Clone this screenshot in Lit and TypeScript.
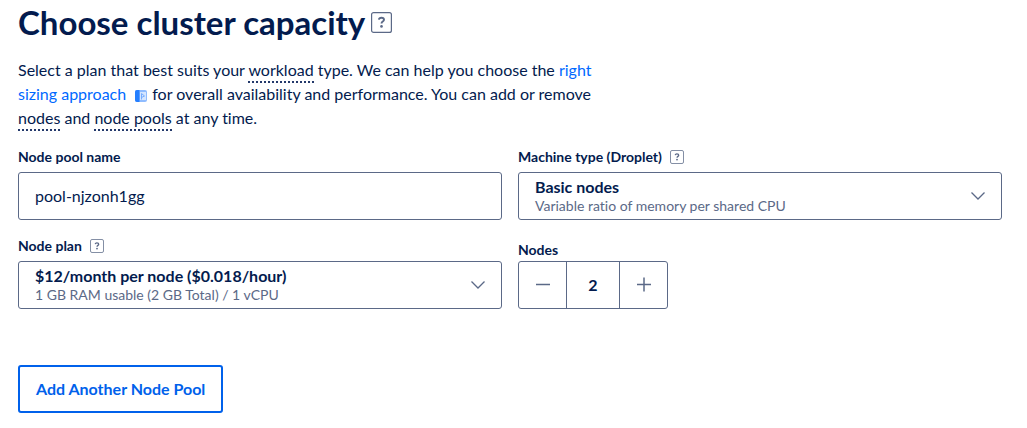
import { LitElement, html, css, svg } from "lit";
import { customElement, property, state } from "lit/decorators.js";

@customElement("help-tip")
class HelpTip extends LitElement {
  @property() label = "Help";
  @property({ type: Boolean, reflect: true }) large = false;

  static styles = css`
    :host { display: inline-flex; }
    .tip {
      display: flex;
      width: 14px;
      height: 14px;
      padding: 0;
      border: 0;
      background: none;
      color: #5b6987;
      cursor: pointer;
    }
    :host([large]) .tip { width: 21px; height: 21px; }
    svg { width: 100%; height: 100%; }
  `;

  render() {
    return html`
      <button class="tip" type="button" aria-label=${this.label}>
        ${this.large
          ? svg`<svg viewBox="0 0 21 21" fill="none" stroke="currentColor">
              <rect x=".6" y=".6" width="19.8" height="19.8" rx="2" stroke-width="1.2" />
              <path d="M7.9 7.6C8.1 6.3 9.1 5.7 10.4 5.7c1.5 0 2.6.7 2.6 2 0 1.8-2.5 1.9-2.5 3.7" stroke-width="1.9" />
              <circle cx="10.5" cy="14.4" r="1.3" fill="currentColor" stroke="none" />
            </svg>`
          : svg`<svg viewBox="0 0 14 14" fill="none" stroke="currentColor">
              <rect x=".5" y=".5" width="13" height="13" rx="1.5" stroke-opacity=".75" />
              <path d="M5.2 5.1C5.4 4.3 6 3.9 6.9 3.9c1 0 1.8.5 1.8 1.3 0 1.2-1.7 1.2-1.7 2.5" stroke-width="1.3" />
              <circle cx="7" cy="9.6" r=".9" fill="currentColor" stroke="none" />
            </svg>`}
      </button>
    `;
  }
}

@customElement("option-picker")
class OptionPicker extends LitElement {
  @property() label = "";
  @property() value = "";
  @property() detail = "";

  static styles = css`
    :host { display: block; }
    .head {
      display: flex;
      align-items: center;
      gap: 8px;
      margin-bottom: 5px;
      font-size: 14px;
      font-weight: 700;
      line-height: 20px;
    }
    .box { display: grid; align-items: center; }
    .box > * { grid-area: 1 / 1; }
    .select {
      appearance: none;
      box-sizing: border-box;
      width: 100%;
      height: 48px;
      padding: 0 40px 18px 16px;
      border: 1px solid #5b6987;
      border-radius: 3px;
      background: #fff;
      color: #031b4e;
      font: 700 16px / 24px Lato, sans-serif;
      font-variant-ligatures: none;
    }
    .detail {
      align-self: end;
      padding: 0 40px 5px 17px;
      color: #5b6987;
      font-size: 14px;
      line-height: 18px;
      pointer-events: none;
    }
    .chevron {
      justify-self: end;
      width: 16px;
      height: 16px;
      margin-right: 16px;
      color: #5b6987;
      pointer-events: none;
    }
  `;

  render() {
    return html`
      <div class="head">
        <label for="choice">${this.label}</label>
        <help-tip label="About ${this.label}"></help-tip>
      </div>
      <div class="box">
        <select class="select" id="choice" aria-describedby="detail">
          <option>${this.value}</option>
        </select>
        <span class="detail" id="detail">${this.detail}</span>
        <svg class="chevron" viewBox="0 0 16 16" fill="none" stroke="currentColor" stroke-width="1.3">
          <path d="M1.5 4.5 8 11l6.5-6.5" />
        </svg>
      </div>
    `;
  }
}

@customElement("app-root")
class AppRoot extends LitElement {
  @state() private nodes = 2;

  static styles = css`
    :host {
      display: block;
      padding: 2px 25px 15px 18px;
      background: #fff;
      color: #031b4e;
      font-family: Lato, sans-serif;
      font-size: 16px;
      font-variant-ligatures: none;
    }
    .title {
      display: flex;
      align-items: center;
      gap: 6px;
      margin-bottom: 16px;
    }
    h1 {
      margin: 0;
      font-size: 33px;
      font-weight: 700;
      line-height: 40px;
    }
    .intro {
      max-width: 584px;
      margin: 0 0 17px;
      line-height: 24px;
    }
    .term {
      padding-bottom: 2px;
      border-bottom: 2px dotted #24396b;
    }
    .link { color: #0069ff; text-decoration: none; }
    .doc {
      width: 12px;
      height: 12px;
      margin: 0 1px 0 9px;
      vertical-align: -2px;
    }
    .fields {
      display: grid;
      grid-template-columns: 1fr 1fr;
      gap: 16px;
      align-items: end;
    }
    .label {
      display: block;
      margin-bottom: 5px;
      font-size: 14px;
      font-weight: 700;
      line-height: 20px;
    }
    .tight { margin-bottom: 1px; }
    .input {
      box-sizing: border-box;
      display: block;
      width: 100%;
      height: 48px;
      padding: 0 16px 2px;
      border: 1px solid #5b6987;
      border-radius: 3px;
      color: #031b4e;
      font: 16px Lato, sans-serif;
    }
    .stepper {
      box-sizing: border-box;
      display: grid;
      grid-template-columns: 47px 54px 47px;
      width: 150px;
      height: 48px;
      border: 1px solid #5b6987;
      border-radius: 3px;
    }
    .step {
      display: grid;
      place-items: center;
      padding: 0;
      border: 0;
      background: none;
      color: #5b6987;
    }
    .step svg { width: 16px; height: 16px; }
    .count {
      min-width: 0;
      padding: 0 0 2px;
      border: solid #5b6987;
      border-width: 0 1px;
      background: none;
      color: #031b4e;
      font: 700 16px Lato, sans-serif;
      text-align: center;
    }
    .add {
      height: 48px;
      margin-top: 56px;
      padding: 0 16px 2px;
      border: 2px solid #0061eb;
      border-radius: 3px;
      background: #fff;
      color: #0061eb;
      font: 700 16px Lato, sans-serif;
    }
  `;

  private step(by: number) {
    this.nodes = Math.max(1, this.nodes + by);
  }

  render() {
    return html`
      <div class="title">
        <h1>Choose cluster capacity</h1>
        <help-tip large label="About cluster capacity"></help-tip>
      </div>
      <p class="intro">
        Select a plan that best suits your <span class="term">workload</span> type. We can help you choose the
        <a class="link" href="#sizing">right sizing approach<svg class="doc" viewBox="0 0 12 12" aria-hidden="true">
            <rect width="12" height="12" rx="2" fill="#8fbcff" />
            <path d="M2 0h2.5v12H2a2 2 0 0 1-2-2V2a2 2 0 0 1 2-2z" fill="#257fff" />
            <rect x="5" y="2" width="6" height="8" fill="#d5e6ff" />
            <path d="M6.5 9.5v-6l3 2.5-3 1.5" fill="none" stroke="#76adff" />
          </svg></a>
        for overall availability and performance. You can add or remove
        <span class="term">nodes</span> and <span class="term">node pools</span> at any time.
      </p>
      <div class="fields">
        <div>
          <label class="label" for="pool">Node pool name</label>
          <input class="input" id="pool" type="text" value="pool-njzonh1gg" />
        </div>
        <option-picker
          label="Machine type (Droplet)"
          value="Basic nodes"
          detail="Variable ratio of memory per shared CPU"
        ></option-picker>
        <option-picker
          label="Node plan"
          value="$12/month per node ($0.018/hour)"
          detail="1 GB RAM usable (2 GB Total) / 1 vCPU"
        ></option-picker>
        <div>
          <label class="label tight" for="nodes">Nodes</label>
          <div class="stepper">
            <button class="step" type="button" aria-label="Remove a node" @click=${() => this.step(-1)}>
              <svg viewBox="0 0 16 16" stroke="currentColor" stroke-width="1.5"><path d="M1 7.5h14" /></svg>
            </button>
            <input class="count" id="nodes" type="text" inputmode="numeric" .value=${String(this.nodes)} />
            <button class="step" type="button" aria-label="Add a node" @click=${() => this.step(1)}>
              <svg viewBox="0 0 16 16" stroke="currentColor" stroke-width="1.5"><path d="M1 7.5h14M8 .5v14" /></svg>
            </button>
          </div>
        </div>
      </div>
      <button class="add" type="button">Add Another Node Pool</button>
    `;
  }
}
